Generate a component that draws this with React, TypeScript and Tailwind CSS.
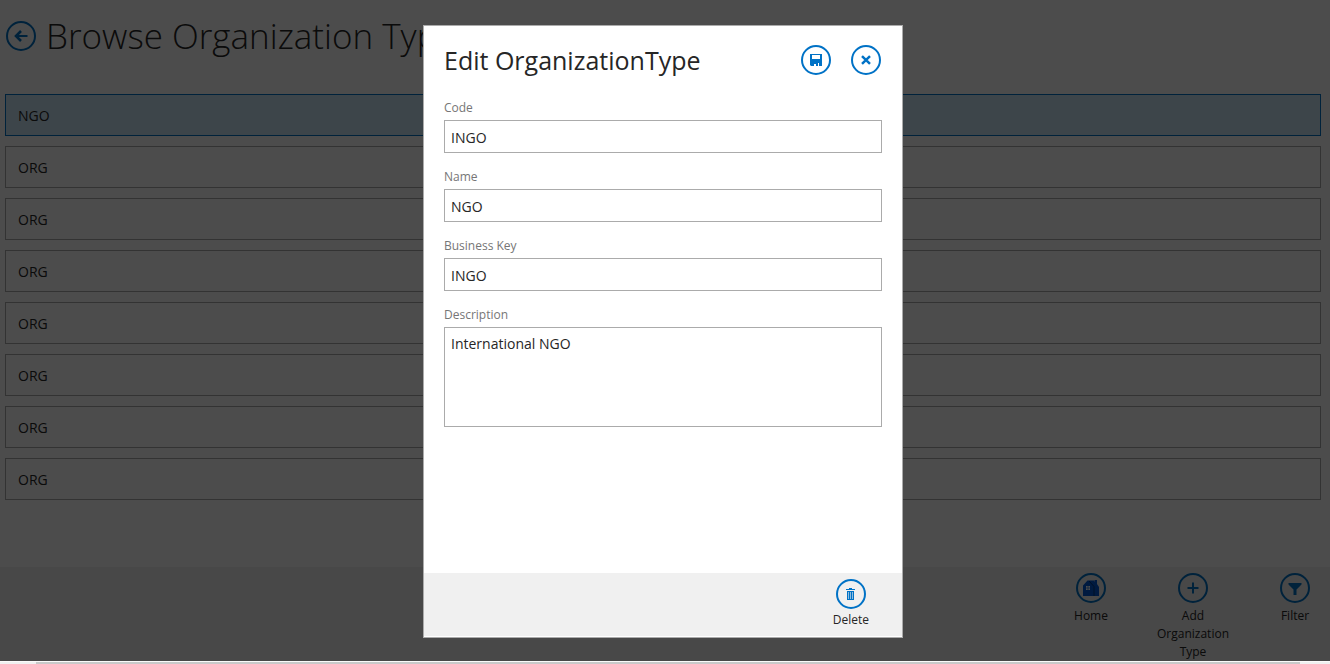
import type { ReactNode } from "react";

const organizations = ["NGO", "ORG", "ORG", "ORG", "ORG", "ORG", "ORG", "ORG"];

const fields = [
  { id: "code", label: "Code", value: "INGO" },
  { id: "name", label: "Name", value: "NGO" },
  { id: "business-key", label: "Business Key", value: "INGO" },
];

function Ring({ children }: { children: ReactNode }) {
  return (
    <span className="flex size-[30px] shrink-0 items-center justify-center rounded-full border-2 border-[#0072c6] text-[#0072c6]">
      {children}
    </span>
  );
}

function BackIcon() {
  return (
    <svg width="14" height="12" viewBox="0 0 14 12" fill="none" stroke="currentColor" strokeWidth="2" aria-hidden="true">
      <path d="M1.5 6H13.5" />
      <path d="M7 1L2 6L7 11" strokeWidth="2.6" />
    </svg>
  );
}

function SaveIcon() {
  return (
    <svg width="12" height="12" viewBox="0 0 12 12" fill="currentColor" fillRule="evenodd" aria-hidden="true">
      <path d="M0 0H12V12H9V8H3V12H1L0 11ZM2 1V5H10V1Z" />
      <path d="M3 8H9V9H3ZM3 9H8V12H6V10H4V12H3Z" />
    </svg>
  );
}

function CloseIcon() {
  return (
    <svg width="10" height="10" viewBox="0 0 10 10" stroke="currentColor" strokeWidth="2.5" aria-hidden="true">
      <path d="M1 1.2L9 8.8M9 1.2L1 8.8" />
    </svg>
  );
}

function TrashIcon() {
  return (
    <svg width="10" height="12" viewBox="0 0 10 12" aria-hidden="true">
      <path d="M3 0H6V1H9V2H0V1H3ZM1 3H8V12H1Z" fill="currentColor" />
      <path d="M2.5 4V11M4.5 4V11M6.5 4V11" stroke="#f0f0f0" strokeWidth="0.6" />
    </svg>
  );
}

function HomeIcon() {
  return (
    <svg width="16" height="16" viewBox="0 0 16 16" aria-hidden="true">
      <path d="M0 5.5L4.5 0.5H11V1.5H11.5V0H14V4L16 7V16H0Z" fill="#0058d8" />
      <path d="M6 1L11 6.5V16" fill="none" stroke="#003478" strokeWidth="1" />
      <path d="M3 6H7V10H3Z" fill="#ffffff" />
      <path d="M5 6V10M3 8H7" stroke="#0058d8" strokeWidth="0.6" />
    </svg>
  );
}

function PlusIcon() {
  return (
    <svg width="12" height="12" viewBox="0 0 12 12" stroke="currentColor" strokeWidth="2" aria-hidden="true">
      <path d="M6 0.5V11.5M0.5 6H11.5" />
    </svg>
  );
}

function FilterIcon() {
  return (
    <svg width="14" height="12" viewBox="0 0 14 12" fill="currentColor" className="mt-0.5" aria-hidden="true">
      <path d="M0.5 0H13.5V1.5L8.5 6.5V12H5.5V6.5L0.5 1.5Z" />
    </svg>
  );
}

const actions = [
  { label: "Home", icon: <HomeIcon /> },
  { label: "Add Organization Type", icon: <PlusIcon /> },
  { label: "Filter", icon: <FilterIcon /> },
];

function BrowseScreen() {
  return (
    <div className="flex h-full flex-col bg-white">
      <header className="flex items-center gap-2.5 px-1.5 pt-2.5">
        <button type="button" aria-label="Back">
          <Ring>
            <BackIcon />
          </Ring>
        </button>
        <h1 className="text-[35px] leading-[52px] font-light whitespace-nowrap text-[#262626]">
          Browse Organization Types
        </h1>
      </header>
      <ul className="mt-8 mr-[9px] ml-[5px] flex flex-1 flex-col gap-2.5">
        {organizations.map((name, i) => (
          <li key={i}>
            <button
              type="button"
              className={
                i === 0
                  ? "flex h-[42px] w-full items-center border border-[#0072c6] bg-[#cde6f7] px-3 pt-0.5 text-left text-sm text-[#262626]"
                  : "flex h-[42px] w-full items-center border border-[#ababab] px-3 pt-0.5 text-left text-sm text-[#262626]"
              }
            >
              {name}
            </button>
          </li>
        ))}
      </ul>
      <footer className="flex items-start justify-end gap-4 bg-[#f0f0f0] pt-1.5">
        {actions.map((action) => (
          <button
            key={action.label}
            type="button"
            className="flex w-[86px] flex-col items-center gap-1 px-2 text-xs leading-[18px] text-[#262626] last:-mr-2"
          >
            <Ring>{action.icon}</Ring>
            <span>{action.label}</span>
          </button>
        ))}
      </footer>
    </div>
  );
}

function EditDialog() {
  return (
    <div
      role="dialog"
      aria-modal="true"
      aria-labelledby="dialog-title"
      className="flex h-full w-[480px] flex-col border border-[#ababab] bg-white"
    >
      <header className="flex items-center justify-between pt-[19px] pr-[21px] pl-5">
        <h2 id="dialog-title" className="text-[25px] leading-[28px] text-[#262626]">
          Edit OrganizationType
        </h2>
        <div className="flex gap-5">
          <button type="button" aria-label="Save">
            <Ring>
              <SaveIcon />
            </Ring>
          </button>
          <button type="button" aria-label="Close">
            <Ring>
              <CloseIcon />
            </Ring>
          </button>
        </div>
      </header>
      <form className="mt-6 flex flex-1 flex-col gap-[15px] px-5">
        {fields.map((field) => (
          <div key={field.id} className="flex flex-col gap-[3px]">
            <label htmlFor={field.id} className="text-xs leading-[18px] text-[#767676]">
              {field.label}
            </label>
            <input
              id={field.id}
              defaultValue={field.value}
              className="h-[33px] w-full border border-[#ababab] px-1.5 pt-0.5 text-sm text-[#262626] outline-none"
            />
          </div>
        ))}
        <div className="flex flex-col gap-[3px]">
          <label htmlFor="description" className="text-xs leading-[18px] text-[#767676]">
            Description
          </label>
          <textarea
            id="description"
            defaultValue="International NGO"
            className="h-[100px] w-full resize-none border border-[#ababab] px-1.5 py-1.5 text-sm text-[#262626] outline-none"
          />
        </div>
      </form>
      <footer className="mb-px flex justify-end bg-[#f0f0f0] pt-1.5 pr-[33px] pb-[7px]">
        <button type="button" className="flex flex-col items-center gap-0.5 text-xs leading-[18px] text-[#262626]">
          <Ring>
            <TrashIcon />
          </Ring>
          Delete
        </button>
      </footer>
    </div>
  );
}

export default function App() {
  return (
    <div className="flex h-screen flex-col overflow-hidden font-['Open_Sans','Noto_Sans',sans-serif]">
      <div className="relative min-h-0 flex-1">
        <BrowseScreen />
        <div className="absolute inset-0 flex justify-center bg-black/70 pt-[25px] pr-1 pb-[23px]">
          <EditDialog />
        </div>
      </div>
      <div className="h-[3px] border-t border-[#fafafa] bg-[#f0f0f0] pr-[30px] pl-9">
        <div className="h-full bg-[#c9c9c9]" />
      </div>
    </div>
  );
}
